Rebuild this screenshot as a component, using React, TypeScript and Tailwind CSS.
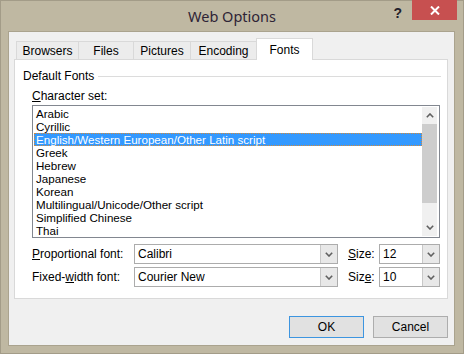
import React from "react";

const Chevron = ({ up = false }: { up?: boolean }) => (
  <svg width="8" height="5" viewBox="0 0 8 5" className="block">
    <path
      d={up ? "M0.8 4.2 L4 1 L7.2 4.2" : "M0.8 0.8 L4 4 L7.2 0.8"}
      fill="none"
      stroke="#606060"
      strokeWidth="1.6"
    />
  </svg>
);

const items = [
  "Arabic",
  "Cyrillic",
  "English/Western European/Other Latin script",
  "Greek",
  "Hebrew",
  "Japanese",
  "Korean",
  "Multilingual/Unicode/Other script",
  "Simplified Chinese",
  "Thai",
];

const Combo = ({ value, width }: { value: string; width: string }) => (
  <div className={`${width} h-[20px] bg-white border border-[#acacac] flex items-stretch`}>
    <div className="flex-1 pl-[3px] flex items-center leading-[14px]">{value}</div>
    <div className="w-[17px] bg-[#e8e8e8] border-l border-[#c8c8c8] flex items-center justify-center">
      <Chevron />
    </div>
  </div>
);

export default function App() {
  return (
    <div className="w-[464px] h-[354px] bg-[#bfb8a2] border border-[#a39c88] flex flex-col font-['Liberation_Sans','Arimo',sans-serif] text-[12px] text-black">
      {/* Title bar */}
      <div className="h-[30px] flex items-start">
        <div className="flex-1" />
        <div className="pt-[5px] text-[14.5px] leading-[20px] text-[#2e2436] font-['Noto_Sans','Open_Sans',sans-serif]">Web Options</div>
        <div className="flex-1 flex justify-end items-start">
          <span className="mt-[3px] mr-[10px] font-bold text-[14px] leading-[18px] text-[#22202a]">?</span>
          <div className="w-[45px] h-[20px] -mt-[1px] mr-[6px] bg-[#c75050] flex items-center justify-center">
            <svg width="10" height="9" viewBox="0 0 10 9">
              <path d="M1 0.5 L9 8.5 M9 0.5 L1 8.5" stroke="#fff" strokeWidth="2" />
            </svg>
          </div>
        </div>
      </div>

      {/* Client area */}
      <div className="ml-[7px] mr-[8px] mb-[7px] flex-1 bg-[#f0f0f0] border border-[#aaa38e] flex flex-col pt-[6px] pl-[5px] pr-[6px]">
        {/* Tabs */}
        <div className="h-[21px] flex items-end pl-[2px]">
          <div className="w-[62px] h-[18px] bg-[#ececec] border-l border-t border-[#d9d9d9] flex items-center justify-center leading-[14px]">Browsers</div>
          <div className="w-[55px] h-[18px] bg-[#ececec] border-l border-t border-[#d9d9d9] flex items-center justify-center leading-[14px]">Files</div>
          <div className="w-[57px] h-[18px] bg-[#ececec] border-l border-t border-[#d9d9d9] flex items-center justify-center leading-[14px]">Pictures</div>
          <div className="w-[66px] h-[18px] bg-[#ececec] border-l border-t border-[#d9d9d9] flex items-center justify-center leading-[14px]">Encoding</div>
          <div className="w-[57px] h-[22px] -mb-[1px] relative z-10 bg-white border-l border-t border-r border-[#d9d9d9] flex justify-center pt-[4px] leading-[14px]">Fonts</div>
        </div>

        {/* Panel */}
        <div className="h-[240px] bg-white border border-[#d9d9d9] pt-[9px] pl-[8px] pr-[6px]">
          <div className="h-[15px] flex items-center leading-[15px]">
            <span>Default Fonts</span>
            <div className="flex-1 ml-[4px] h-px bg-[#dcdcdc]" />
          </div>
          <div className="pl-[9px] pr-[1px]">
            <div className="mt-[5px] h-[15px] leading-[15px]">
              <span className="underline">C</span>haracter set:
            </div>
            <div className="mt-[1px] h-[133px] border border-[#828790] p-[1px] flex">
              <div className="flex-1 flex flex-col text-[11.6px]">
                {items.map((it, i) =>
                  i === 2 ? (
                    <div
                      key={it}
                      className="h-[13px] leading-[11px] bg-[#3399ff] text-white pl-[1px] border border-dotted border-[#d28a3c] whitespace-nowrap"
                    >
                      {it}
                    </div>
                  ) : (
                    <div key={it} className="h-[13px] leading-[13px] pl-[2px] whitespace-nowrap">
                      {it}
                    </div>
                  )
                )}
              </div>
              <div className="w-[15px] mr-[1px] bg-[#f0f0f0] flex flex-col">
                <div className="h-[17px] flex items-center justify-center">
                  <Chevron up />
                </div>
                <div className="h-[79px] bg-[#cdcdcd]" />
                <div className="flex-1" />
                <div className="h-[17px] flex items-center justify-center">
                  <Chevron />
                </div>
              </div>
            </div>

            <div className="mt-[6px] flex items-center">
              <div className="w-[102px] leading-[14px]">
                <span className="underline">P</span>roportional font:
              </div>
              <Combo value="Calibri" width="w-[204px]" />
              <div className="w-[31px] ml-[10px] leading-[14px]">
                <span className="underline">S</span>ize:
              </div>
              <Combo value="12" width="w-[61px]" />
            </div>
            <div className="mt-[3px] flex items-center">
              <div className="w-[102px] leading-[14px]">
                Fixed-<span className="underline">w</span>idth font:
              </div>
              <Combo value="Courier New" width="w-[204px]" />
              <div className="w-[31px] ml-[10px] leading-[14px]">
                Siz<span className="underline">e</span>:
              </div>
              <Combo value="10" width="w-[61px]" />
            </div>
          </div>
        </div>

        {/* Buttons */}
        <div className="mt-[17px] flex justify-end gap-[9px]">
          <button className="w-[75px] h-[22px] bg-[#e1e1e1] border border-[#3d95e0] leading-[14px]">OK</button>
          <button className="w-[75px] h-[22px] bg-[#e1e1e1] border border-[#adadad] leading-[14px]">Cancel</button>
        </div>
      </div>
    </div>
  );
}
